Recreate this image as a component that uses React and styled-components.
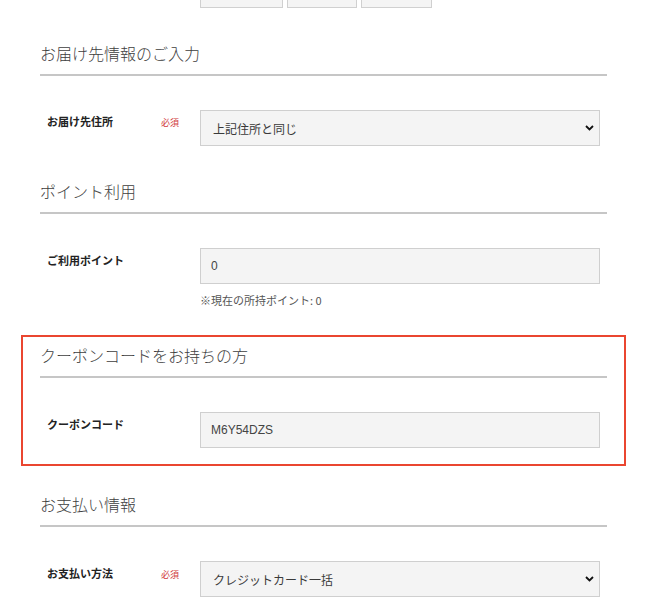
import React from "react";
import styled, { createGlobalStyle } from "styled-components";

const Global = createGlobalStyle`
  html, body { margin: 0; padding: 0; background: #fff; }
  body { font-family: "Roboto", "Noto Sans CJK JP", sans-serif; color: #333; }
  * { box-sizing: border-box; }
`;

const Page = styled.div`
  width: 660px;
  padding: 0 53px 0 40px;
  display: flex;
  flex-direction: column;
`;

const TopRow = styled.div`
  height: 8px;
  overflow: hidden;
  display: flex;
  align-items: flex-end;
  gap: 4px;
  padding-left: 160px;
`;

const StubBox = styled.div`
  width: ${(p) => p.$w}px;
  height: 36px;
  background: #f4f4f4;
  border: 1px solid #d0d0d0;
`;

const Section = styled.section`
  margin-top: ${(p) => (p.$highlight ? 26 : 33)}px;
  ${(p) =>
    p.$highlight &&
    `
    margin-left: -19px;
    margin-right: -19px;
    margin-bottom: -7px;
    border: 2px solid #ea4630;
    padding: 6px 17px 16px;
  `}
`;

const Heading = styled.h2`
  margin: 0;
  font-family: "Noto Sans CJK JP", sans-serif;
  font-weight: 300;
  font-size: 16px;
  line-height: 24px;
  color: #3e3e3e;
  padding-bottom: 9px;
  border-bottom: 2px solid #c6c6c6;
`;

const Row = styled.div`
  margin-top: 34px;
  display: flex;
  align-items: flex-start;
`;

const LabelCell = styled.div`
  width: 160px;
  flex: none;
  display: flex;
  justify-content: space-between;
  align-items: baseline;
  padding: ${(p) => (p.$tight ? 4 : 5)}px 21px 0 7px;
`;

const Label = styled.span`
  font-family: "Noto Sans CJK JP", sans-serif;
  font-weight: 700;
  font-size: 11px;
  line-height: 14px;
  color: #222;
`;

const Required = styled.span`
  font-family: "Noto Sans CJK JP", sans-serif;
  font-size: 9px;
  line-height: 14px;
  color: #d0383a;
`;

const FieldCol = styled.div`
  flex: 1;
  display: flex;
  flex-direction: column;
`;

const SelectWrap = styled.div`
  position: relative;
  width: 400px;
`;

const Select = styled.select`
  appearance: none;
  -webkit-appearance: none;
  width: 100%;
  height: 36px;
  background: #f4f4f4;
  border: 1px solid #cfcfcf;
  border-radius: 0;
  padding: 0 30px 0 12px;
  font-family: "Noto Sans CJK JP", sans-serif;
  font-weight: 400;
  font-size: 12px;
  color: #3a3a3a;
  outline: none;
`;

const Chevron = styled.svg`
  position: absolute;
  right: 6px;
  top: 15px;
  width: 9px;
  height: 6px;
  pointer-events: none;
`;

const Input = styled.input`
  width: 400px;
  height: 36px;
  background: #f4f4f4;
  border: 1px solid #cfcfcf;
  border-radius: 0;
  padding: 0 10px;
  font-family: "Liberation Sans", "Noto Sans CJK JP", sans-serif;
  font-size: 12px;
  color: #444;
  outline: none;
`;

const Note = styled.p`
  margin: 8px 0 0;
  font-family: "Noto Sans CJK JP", sans-serif;
  font-weight: 400;
  font-size: 11px;
  line-height: 17px;
  color: #555;
`;

function SelectField({ value, options }) {
  return (
    <SelectWrap>
      <Select defaultValue={value}>
        {options.map((o) => (
          <option key={o}>{o}</option>
        ))}
      </Select>
      <Chevron viewBox="0 0 9 6">
        <path d="M1 1 L4.5 4.5 L8 1" fill="none" stroke="#111" strokeWidth="1.8" />
      </Chevron>
    </SelectWrap>
  );
}

function FieldRow({ label, required, tight, children }) {
  return (
    <Row>
      <LabelCell $tight={tight}>
        <Label>{label}</Label>
        {required && <Required>必須</Required>}
      </LabelCell>
      <FieldCol>{children}</FieldCol>
    </Row>
  );
}

export default function App() {
  return (
    <>
      <Global />
      <Page>
        <TopRow>
          <StubBox $w={83} />
          <StubBox $w={70} />
          <StubBox $w={71} />
        </TopRow>

        <Section>
          <Heading>お届け先情報のご入力</Heading>
          <FieldRow label="お届け先住所" required tight>
            <SelectField value="上記住所と同じ" options={["上記住所と同じ", "別の住所を指定"]} />
          </FieldRow>
        </Section>

        <Section>
          <Heading>ポイント利用</Heading>
          <FieldRow label="ご利用ポイント">
            <Input defaultValue="0" />
            <Note>※現在の所持ポイント: 0</Note>
          </FieldRow>
        </Section>

        <Section $highlight>
          <Heading>クーポンコードをお持ちの方</Heading>
          <FieldRow label="クーポンコード">
            <Input defaultValue="M6Y54DZS" />
          </FieldRow>
        </Section>

        <Section>
          <Heading>お支払い情報</Heading>
          <FieldRow label="お支払い方法" required>
            <SelectField value="クレジットカード一括" options={["クレジットカード一括", "代金引換"]} />
          </FieldRow>
        </Section>
      </Page>
    </>
  );
}
